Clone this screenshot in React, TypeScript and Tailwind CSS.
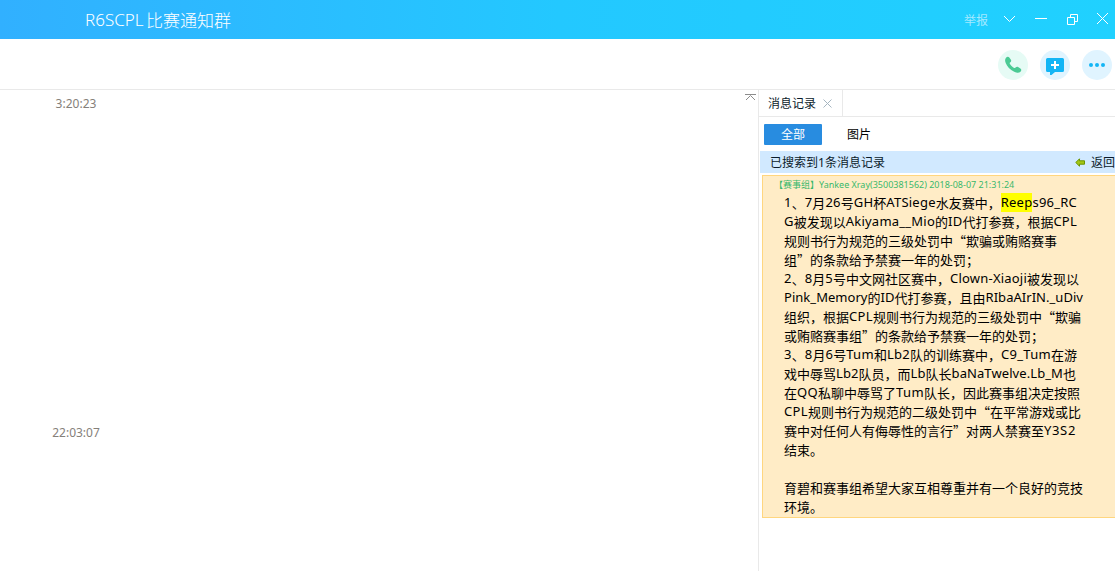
import React from "react";

const cjk = "font-['Noto_Sans_CJK_SC',sans-serif]";
const latin = "font-['Noto_Sans','Noto_Sans_CJK_SC',sans-serif]";

type Line = { text: string; width: number; mark?: string };

const lines: Line[] = [
  { text: "1、7月26号GH杯ATSiege水友赛中，Reeps96_RC", width: 293, mark: "Reep" },
  { text: "G被发现以Akiyama__Mio的ID代打参赛，根据CPL", width: 293 },
  { text: "规则书行为规范的三级处罚中“欺骗或贿赂赛事", width: 273 },
  { text: "组”的条款给予禁赛一年的处罚；", width: 195 },
  { text: "2、8月5号中文网社区赛中，Clown-Xiaoji被发现以", width: 295 },
  { text: "Pink_Memory的ID代打参赛，且由RIbaAIrIN._uDiv", width: 299 },
  { text: "组织，根据CPL规则书行为规范的三级处罚中“欺骗", width: 297 },
  { text: "或贿赂赛事组”的条款给予禁赛一年的处罚；", width: 260 },
  { text: "3、8月6号Tum和Lb2队的训练赛中，C9_Tum在游", width: 293 },
  { text: "戏中辱骂Lb2队员，而Lb队长baNaTwelve.Lb_M也", width: 292 },
  { text: "在QQ私聊中辱骂了Tum队长，因此赛事组决定按照", width: 296 },
  { text: "CPL规则书行为规范的二级处罚中“在平常游戏或比", width: 297 },
  { text: "赛中对任何人有侮辱性的言行”对两人禁赛至Y3S2", width: 292 },
  { text: "结束。", width: 39 },
  { text: "", width: 0 },
  { text: "育碧和赛事组希望大家互相尊重并有一个良好的竞技", width: 299 },
  { text: "环境。", width: 39 },
];

function Runs({ line }: { line: Line }) {
  const ref = React.useRef<HTMLDivElement>(null);
  const [spacing, setSpacing] = React.useState(0);
  const latinCount = (line.text.match(/[\x21-\x7e]/g) || []).length;
  React.useLayoutEffect(() => {
    if (ref.current && latinCount) {
      setSpacing((line.width - ref.current.getBoundingClientRect().width) / latinCount);
    }
  }, []);
  const parts = line.text.match(/[\x21-\x7e]+|[^\x21-\x7e]+/g) || [];
  return (
    <div ref={ref} className="flex h-[19px] w-max whitespace-nowrap leading-[19px]">
      {parts.map((part, i) => {
        if (!/^[\x21-\x7e]/.test(part)) return <span key={i} className={cjk}>{part}</span>;
        const marked = line.mark && part.startsWith(line.mark) ? line.mark : "";
        return (
          <span key={i} className={latin} style={{ letterSpacing: spacing }}>
            {marked && <span className="inline-block h-[19px] bg-[#ffff00] align-top">{marked}</span>}
            {part.slice(marked.length)}
          </span>
        );
      })}
    </div>
  );
}

function TitleBar() {
  return (
    <header className="flex h-[39px] items-center bg-linear-to-r from-[#31b0ff] via-[#23c8ff] via-50% to-[#20d1ff] pl-[85px] text-white">
      <h1 className="flex text-[17px] leading-[39px] font-light">
        <span className={`w-[61px] ${latin}`}>R6SCPL</span>
        <span className={cjk}>比赛通知群</span>
      </h1>
      <span className={`ml-auto mr-[15px] text-[12px] text-[#a3e9ff] ${cjk}`}>举报</span>
      <svg width="112" height="39" viewBox="0 0 112 39" fill="none" stroke="white" strokeWidth="1">
        <path d="M1 16l5.5 5.5L12 16" />
        <path d="M32 18.5h12" />
        <path d="M64.5 17.5h7v7h-7zM67.5 17.5v-3h7v7h-3" />
        <path d="M94 13l11 11M105 13L94 24" />
      </svg>
    </header>
  );
}

function Toolbar() {
  return (
    <div className="flex h-[51px] items-start justify-end gap-3 border-b border-[#e9e9e9] pt-[11px] pr-[3px]">
      <div className="grid size-[30px] place-items-center rounded-full bg-[#e6fbf5]">
        <svg width="18" height="18" viewBox="0 0 18 18" fill="#4bca94">
          <path d="M2 1.7C3 .6 4.5.5 5.3 1.5l1.6 2.3c.6 1 .3 1.9-.8 2.7-.7.5-.5 1 .2 2 1 1.400 2 2.300 3.400 3.200.9.5 1.400.5 1.900-.1.800-.9 1.500-1.100 2.500-.5l2.300 1.500c1.200.8 1.200 2.100.1 3.100-1.400 1.400-3.700 1.400-6.300.1C6 13.700 3.100 10.500 1.700 7 .8 4.800.9 3 2 1.700Z" />
        </svg>
      </div>
      <div className="grid size-[30px] place-items-center rounded-full bg-[#e0f4ff]">
        <svg className="mt-[3px]" width="18" height="18" viewBox="0 0 18 18">
          <path d="M1.500 0h15Q18 0 18 1.500v11q0 1.500-1.500 1.500H9l-3.500 3H4v-3H1.500Q0 14 0 12.500v-11Q0 0 1.500 0Z" fill="#13b5f5" />
          <path d="M5 7h8M9 3v8" stroke="white" strokeWidth="2" />
        </svg>
      </div>
      <div className="flex size-[30px] items-center justify-center gap-[2px] rounded-full bg-[#e0f4ff]">
        <i className="size-1 rounded-full bg-[#13b5f5]" />
        <i className="size-1 rounded-full bg-[#13b5f5]" />
        <i className="size-1 rounded-full bg-[#13b5f5]" />
      </div>
    </div>
  );
}

function History() {
  return (
    <aside className={`w-[357px] shrink-0 border-l border-[#e9e9e9] text-[12px] text-[#0b1b2b] ${cjk}`}>
      <div className="flex h-[27px] border-b border-[#e9e9e9]">
        <div className="flex w-[84px] items-center border-r border-[#e9e9e9] pl-[9px]">
          消息记录
          <svg className="ml-[7px]" width="9" height="9" viewBox="0 0 9 9" stroke="#a5b5c0">
            <path d="M.5.5l8 8M8.500.5l-8 8" />
          </svg>
        </div>
      </div>
      <div className="flex h-[34px] items-center pl-[5px] text-black">
        <div className="flex h-[21px] w-[58px] items-center justify-center rounded-[1px] bg-[#288ce0] text-white">全部</div>
        <div className="ml-[25px]">图片</div>
      </div>
      <div className="ml-px flex h-[22px] items-center bg-[#d1e9ff] pl-[10px]">
        <span>已搜索到<span className={latin}>1</span>条消息记录</span>
        <svg className="ml-auto mr-[6px]" width="10" height="9" viewBox="0 0 10 9" fill="#a4c614" stroke="#6a9300">
          <path d="M.8 4.500L4.500.8v2h5v3.400h-5v2Z" />
        </svg>
        <span className="w-[24px] whitespace-nowrap">返回</span>
      </div>
      <div className="mt-[2px] ml-[3px] h-[343px] border border-r-0 border-[#ffd67f] bg-[#ffecc6] text-black">
        <div className="flex h-[17px] items-center whitespace-nowrap pl-[11px] text-[9px] text-[#39b86b]">
          <span className="w-[45px]">【赛事组】</span>
          <span className={latin}>Yankee Xray(3500381562) 2018-08-07 21:31:24</span>
        </div>
        <div className="pl-[21px] text-[13px]">
          {lines.map((line, i) => <Runs key={i} line={line} />)}
        </div>
      </div>
    </aside>
  );
}

export default function App() {
  return (
    <div className="flex h-[571px] w-[1115px] flex-col overflow-hidden bg-white">
      <TitleBar />
      <Toolbar />
      <div className="flex min-h-0 flex-1">
        <main className={`flex flex-1 justify-between text-[12px] text-[#85807a] ${latin}`}>
          <div className="flex w-[152px] flex-col items-center gap-[311px] pt-[5px] leading-[18px]">
            <time>3:20:23</time>
            <time>22:03:07</time>
          </div>
          <svg className="mt-[3px] mr-[2px]" width="11" height="9" viewBox="0 0 11 9" fill="none" stroke="#8c8c8c">
            <path d="M0 1.500h11M1 7l4.500-4.500L10 7" />
          </svg>
        </main>
        <History />
      </div>
    </div>
  );
}
